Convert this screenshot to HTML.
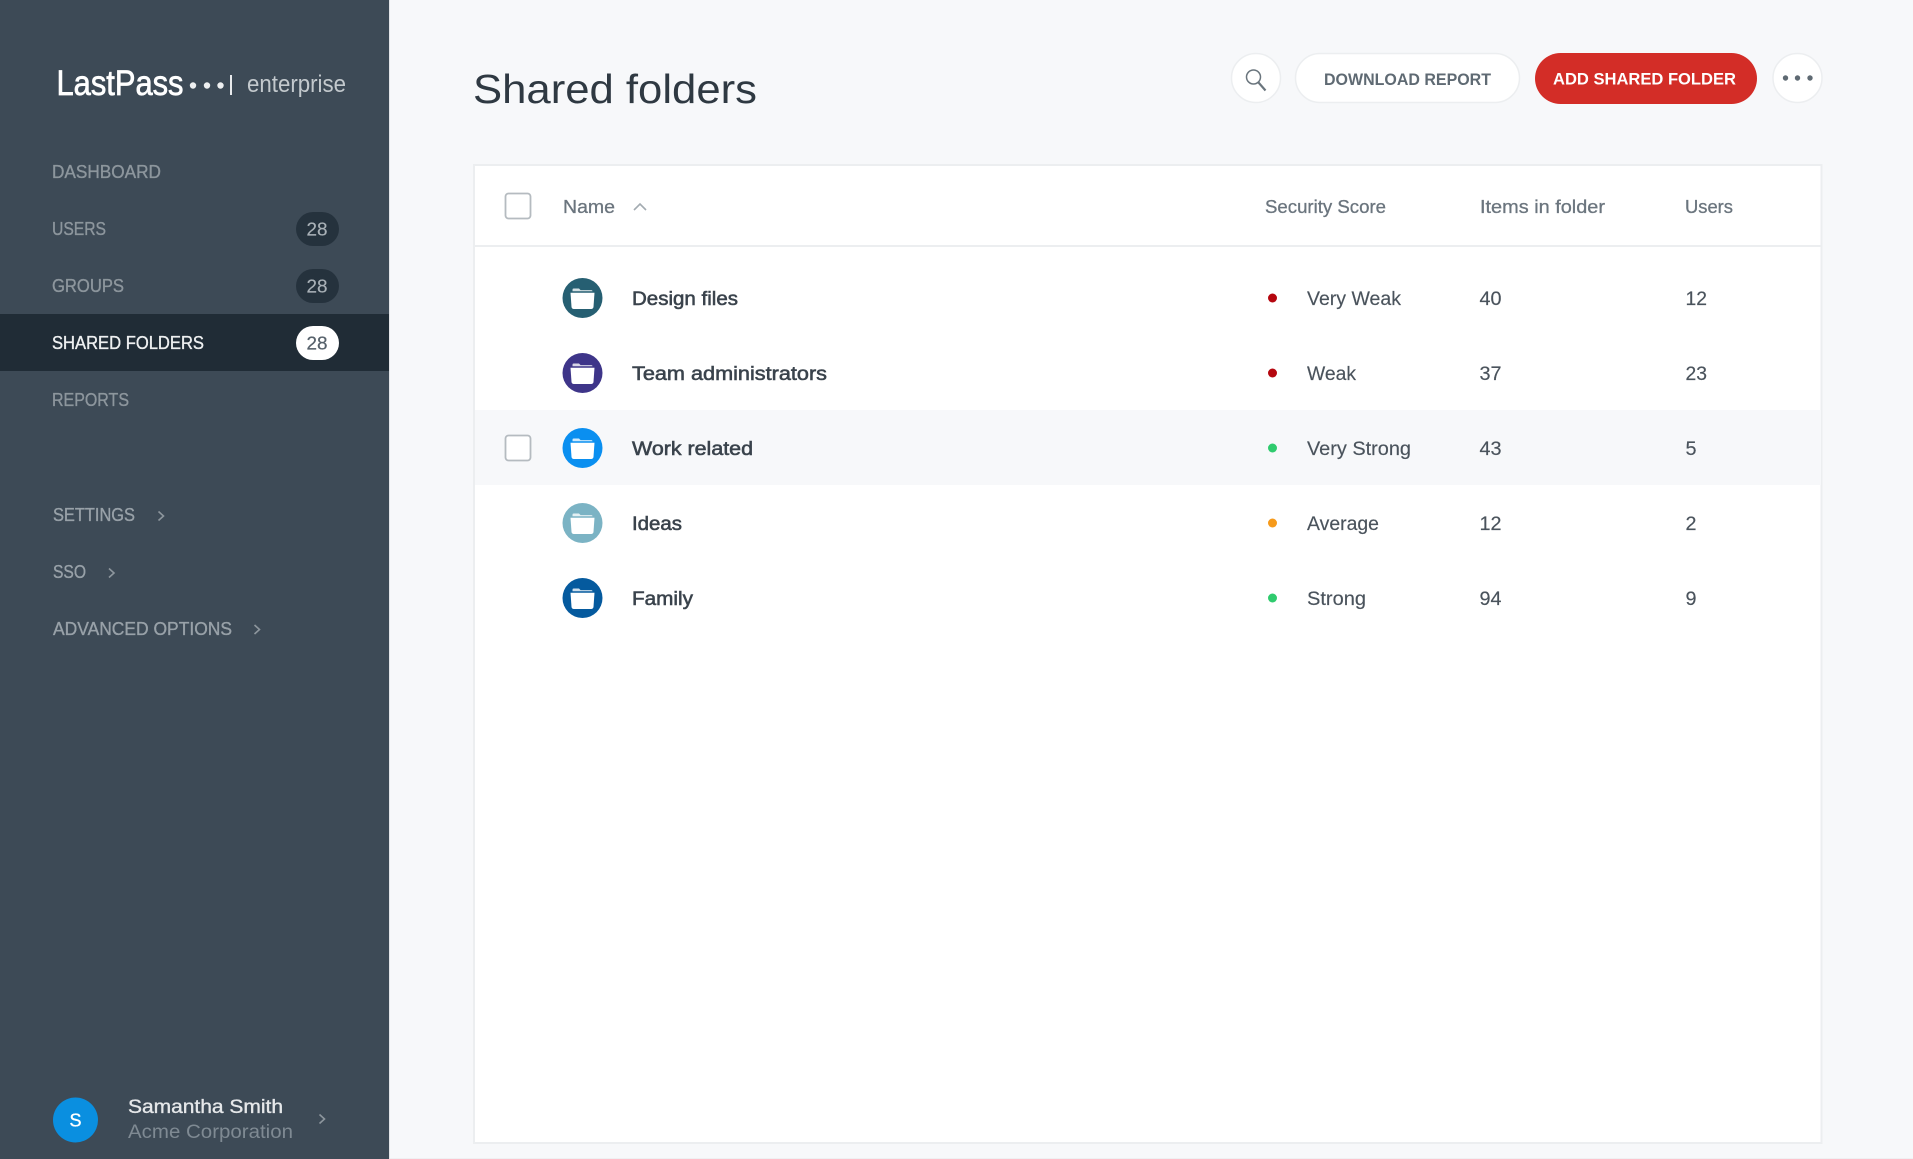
<!DOCTYPE html>
<html lang="en"><head><meta charset="utf-8"><title>Shared folders</title>
<style>
html,body{margin:0;padding:0;width:1913px;height:1159px;overflow:hidden;background:#f7f8fa}
svg{display:block;filter:blur(.35px)}
text{font-family:"Liberation Sans",Arial,sans-serif;font-size:18px}
.nav{fill:#8d969d;stroke:#8d969d;stroke-width:.35px;font-size:18.5px}
.nav2{fill:#98a1a8;stroke:#98a1a8;stroke-width:.35px;font-size:18.5px}
.b{text-anchor:start;fill:#a9b1b7;stroke:#a9b1b7;stroke-width:.15px;font-size:18px}
.h{fill:#6b757e;stroke:#6b757e;stroke-width:.3px;font-size:18.5px}
.n{fill:#3a434c;stroke:#3a434c;stroke-width:.55px;font-size:19px}
.t{fill:#4a535c;stroke:#4a535c;stroke-width:.15px;font-size:19px}
.chev{fill:none;stroke:#8d969d;stroke-width:1.6}
</style></head><body>
<svg xmlns="http://www.w3.org/2000/svg" width="1913" height="1159" viewBox="0 0 1913 1159">
<defs>
<g id="folder">
<path d="M-10-6.800V-8.300q0-1.200 1.200-1.200h5.300l1.600 1.600H8.800q1.200 0 1.200 1.100z" fill="#fff" opacity=".8"/>
<path d="M-12-5.200H12L11 8.800q-.2 2.200-2.400 2.200H-8.600q-2.200 0-2.400-2.200z" fill="#fff"/>
</g>
</defs>
<rect width="1913" height="1159" fill="#f7f8fa"/>
<rect x="0" y="1158" width="1913" height="1" fill="#eff0f2"/>
<!-- sidebar -->
<rect width="389" height="1159" fill="#3d4a56"/>
<rect x="389" width="1" height="1159" fill="#e3e5e8"/>
<text x="56.500" y="95" fill="#fff" stroke="#fff" stroke-width=".7" style="font-size:35px" textLength="127" lengthAdjust="spacingAndGlyphs">LastPass</text>
<circle cx="193" cy="85.500" r="3.200" fill="#eef0f1"/><circle cx="207" cy="85.500" r="3.200" fill="#eef0f1"/><circle cx="220.500" cy="85.500" r="3.200" fill="#eef0f1"/>
<rect x="230" y="75" width="2" height="20" fill="#e8eaec"/>
<text x="247" y="92" fill="#c3c9cd" style="font-size:24px" textLength="99" lengthAdjust="spacingAndGlyphs">enterprise</text>

<text class="nav" x="52" y="178" textLength="109" lengthAdjust="spacingAndGlyphs">DASHBOARD</text>
<text class="nav" x="52" y="235" textLength="54" lengthAdjust="spacingAndGlyphs">USERS</text>
<rect x="296" y="212" width="43" height="34" rx="17" fill="#25323d"/>
<text class="b" x="306.500" y="235.500" textLength="21" lengthAdjust="spacingAndGlyphs">28</text>
<text class="nav" x="52" y="292" textLength="72" lengthAdjust="spacingAndGlyphs">GROUPS</text>
<rect x="296" y="269" width="43" height="34" rx="17" fill="#25323d"/>
<text class="b" x="306.500" y="292.500" textLength="21" lengthAdjust="spacingAndGlyphs">28</text>
<rect y="314" width="389" height="57" fill="#202c36"/>
<text x="52" y="349" fill="#eef0f1" stroke="#eef0f1" stroke-width=".35" style="font-size:18.500px" textLength="152" lengthAdjust="spacingAndGlyphs">SHARED FOLDERS</text>
<rect x="296" y="326" width="43" height="34" rx="17" fill="#fff"/>
<text x="306.500" y="349.500" fill="#56616b" stroke="#56616b" stroke-width=".2" style="font-size:18px" textLength="21" lengthAdjust="spacingAndGlyphs">28</text>
<text class="nav" x="52" y="406" textLength="77" lengthAdjust="spacingAndGlyphs">REPORTS</text>

<text class="nav2" x="53" y="521" textLength="82" lengthAdjust="spacingAndGlyphs">SETTINGS</text>
<path class="chev" d="M158.500 511.500l5 4.500-5 4.500"/>
<text class="nav2" x="53" y="578" textLength="33" lengthAdjust="spacingAndGlyphs">SSO</text>
<path class="chev" d="M109 568.500l5 4.500-5 4.500"/>
<text class="nav2" x="53" y="635" textLength="179" lengthAdjust="spacingAndGlyphs">ADVANCED OPTIONS</text>
<path class="chev" d="M254.500 625l5 4.500-5 4.500"/>

<circle cx="75.500" cy="1120" r="22.500" fill="#0a8fe0"/>
<text x="75.500" y="1126.500" fill="#fff" stroke="#fff" stroke-width=".3" text-anchor="middle" style="font-size:18px">S</text>
<text x="128" y="1113" fill="#e6e8ea" stroke="#e6e8ea" stroke-width=".35" style="font-size:19px" textLength="155" lengthAdjust="spacingAndGlyphs">Samantha Smith</text>
<text x="128" y="1138" fill="#7f8a93" style="font-size:19px" textLength="165" lengthAdjust="spacingAndGlyphs">Acme Corporation</text>
<path class="chev" d="M319.500 1114.500l5 4.500-5 4.500"/>

<!-- header -->
<text x="473" y="103" fill="#2f3942" style="font-size:41px" textLength="284" lengthAdjust="spacingAndGlyphs">Shared folders</text>
<circle cx="1256" cy="78" r="24.500" fill="#fff" stroke="#eceef0" stroke-width="1.500"/>
<circle cx="1253.500" cy="77" r="7" fill="none" stroke="#6a757d" stroke-width="1.500"/>
<path d="M1258.500 82.500l7 8" stroke="#6a757d" stroke-width="2.200" fill="none"/>
<rect x="1295.500" y="53.500" width="224" height="49" rx="24.500" fill="#fff" stroke="#eceef0" stroke-width="1.500"/>
<text x="1324" y="85" fill="#5f6a73" font-weight="bold" style="font-size:17px" textLength="167" lengthAdjust="spacingAndGlyphs">DOWNLOAD REPORT</text>
<rect x="1535" y="53" width="222" height="51" rx="25.500" fill="#d32d27"/>
<text x="1553" y="84.500" fill="#fff" font-weight="bold" style="font-size:17px" textLength="183" lengthAdjust="spacingAndGlyphs">ADD SHARED FOLDER</text>
<circle cx="1797.500" cy="78" r="24.500" fill="#fff" stroke="#eceef0" stroke-width="1.500"/>
<circle cx="1785.500" cy="78" r="2.700" fill="#5f6a73"/><circle cx="1797.500" cy="78" r="2.700" fill="#5f6a73"/><circle cx="1810" cy="78" r="2.700" fill="#5f6a73"/>

<!-- card -->
<rect x="474" y="165" width="1347.500" height="978" fill="#fff" stroke="#eceef0" stroke-width="2"/>
<rect x="475" y="245" width="1346" height="2" fill="#eceef0"/>
<rect x="505.500" y="193.500" width="25" height="25" rx="3" fill="#fff" stroke="#b5bbc0" stroke-width="1.800"/>
<text class="h" x="563" y="213" textLength="52" lengthAdjust="spacingAndGlyphs">Name</text>
<path d="M634 210l6-6 6 6" fill="none" stroke="#a3abb1" stroke-width="1.600"/>
<text class="h" x="1265" y="213" textLength="121" lengthAdjust="spacingAndGlyphs">Security Score</text>
<text class="h" x="1480" y="213" textLength="125" lengthAdjust="spacingAndGlyphs">Items in folder</text>
<text class="h" x="1685" y="213" textLength="48" lengthAdjust="spacingAndGlyphs">Users</text>

<rect x="475" y="410" width="1346" height="75" fill="#f7f8fa"/>
<rect x="505.500" y="435.500" width="25" height="25" rx="3" fill="#fff" stroke="#b5bbc0" stroke-width="1.800"/>

<circle cx="582.500" cy="298" r="20" fill="#265f72"/><use href="#folder" x="582.500" y="298"/>
<text class="n" x="632" y="305" textLength="106" lengthAdjust="spacingAndGlyphs">Design files</text>
<circle cx="1272.500" cy="298" r="4.500" fill="#b5070f"/>
<text class="t" x="1307" y="305" textLength="94" lengthAdjust="spacingAndGlyphs">Very Weak</text>
<text class="t" x="1479.500" y="305" textLength="22" lengthAdjust="spacingAndGlyphs">40</text>
<text class="t" x="1685.500" y="305" textLength="21.500" lengthAdjust="spacingAndGlyphs">12</text>

<circle cx="582.500" cy="373" r="20" fill="#3e3589"/><use href="#folder" x="582.500" y="373"/>
<text class="n" x="632" y="380" textLength="195" lengthAdjust="spacingAndGlyphs">Team administrators</text>
<circle cx="1272.500" cy="373" r="4.500" fill="#b5070f"/>
<text class="t" x="1307" y="380" textLength="49" lengthAdjust="spacingAndGlyphs">Weak</text>
<text class="t" x="1479.500" y="380" textLength="22" lengthAdjust="spacingAndGlyphs">37</text>
<text class="t" x="1685.500" y="380" textLength="21.500" lengthAdjust="spacingAndGlyphs">23</text>

<circle cx="582.500" cy="448" r="20" fill="#0a8ff0"/><use href="#folder" x="582.500" y="448"/>
<text class="n" x="632" y="455" textLength="121" lengthAdjust="spacingAndGlyphs">Work related</text>
<circle cx="1272.500" cy="448" r="4.500" fill="#2fcb6e"/>
<text class="t" x="1307" y="455" textLength="104" lengthAdjust="spacingAndGlyphs">Very Strong</text>
<text class="t" x="1479.500" y="455" textLength="22" lengthAdjust="spacingAndGlyphs">43</text>
<text class="t" x="1685.500" y="455" textLength="11" lengthAdjust="spacingAndGlyphs">5</text>

<circle cx="582.500" cy="523" r="20" fill="#7bb3c4"/><use href="#folder" x="582.500" y="523"/>
<text class="n" x="632" y="530" textLength="50" lengthAdjust="spacingAndGlyphs">Ideas</text>
<circle cx="1272.500" cy="523" r="4.500" fill="#f69a1b"/>
<text class="t" x="1307" y="530" textLength="72" lengthAdjust="spacingAndGlyphs">Average</text>
<text class="t" x="1479.500" y="530" textLength="22" lengthAdjust="spacingAndGlyphs">12</text>
<text class="t" x="1685.500" y="530" textLength="11" lengthAdjust="spacingAndGlyphs">2</text>

<circle cx="582.500" cy="598" r="20" fill="#055a9e"/><use href="#folder" x="582.500" y="598"/>
<text class="n" x="632" y="605" textLength="61" lengthAdjust="spacingAndGlyphs">Family</text>
<circle cx="1272.500" cy="598" r="4.500" fill="#2fcb6e"/>
<text class="t" x="1307" y="605" textLength="59" lengthAdjust="spacingAndGlyphs">Strong</text>
<text class="t" x="1479.500" y="605" textLength="22" lengthAdjust="spacingAndGlyphs">94</text>
<text class="t" x="1685.500" y="605" textLength="11" lengthAdjust="spacingAndGlyphs">9</text>
</svg>
</body></html>
